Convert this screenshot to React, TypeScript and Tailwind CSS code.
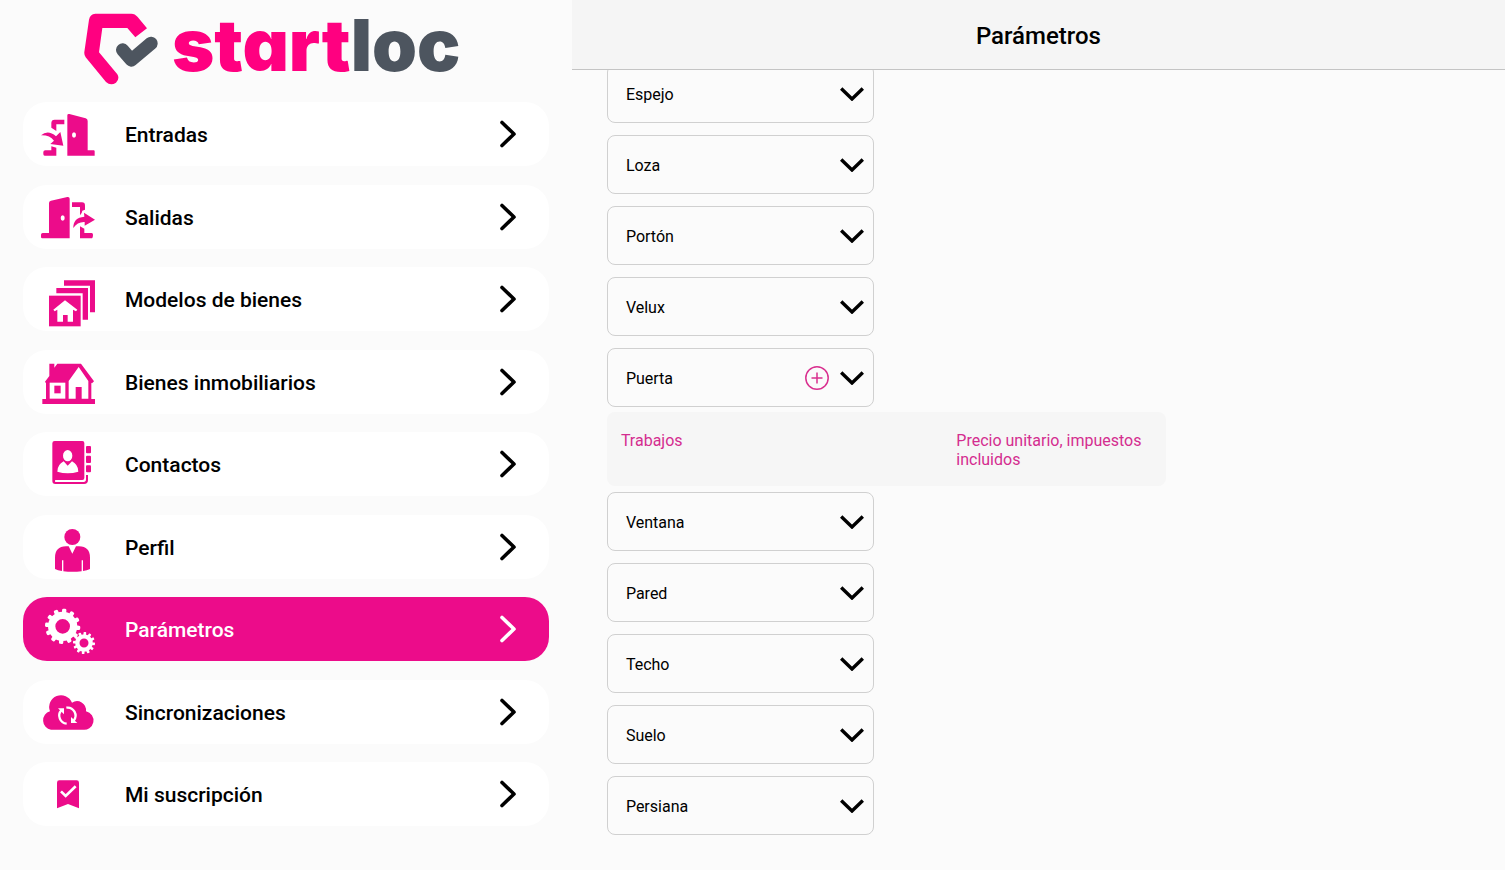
import React, { useState } from 'react';

interface NavItem {
  id: string;
  label: string;
  icon: React.ReactNode;
}

const GEAR_ANGLES = [0, 30, 60, 90, 120, 150, 180, 210, 240, 270, 300, 330];

const IconFrame = ({ viewBox, children }: { viewBox: string; children: React.ReactNode }) => (
  <svg viewBox={viewBox} className="h-16 w-[60px] shrink-0" fill="currentColor" aria-hidden="true">
    {children}
  </svg>
);

const NAV_ITEMS: NavItem[] = [
  {
    id: 'entradas',
    label: 'Entradas',
    icon: (
      <IconFrame viewBox="69 22 180 192">
        <path d="M157 62Q157 57 163 58L212 71Q218 73 218 79V167H236Q239 167 239 170V183H157Z" />
        <path d="M109 99V85Q109 75 119 75H148V89H124V109Z" />
        <path d="M89 183Q85 183 85 178V172Q85 167 91 167H109V155L124 159V183Z" />
        <path d="M78 122Q99 104 123 125L136 112L145 153L106 148L117 138Q104 121 78 122Z" />
        <ellipse cx="177" cy="121" rx="6" ry="8" fill="#fff" />
      </IconFrame>
    ),
  },
  {
    id: 'salidas',
    label: 'Salidas',
    icon: (
      <IconFrame viewBox="69 269 180 192">
        <path d="M102 323Q102 317 108 316L157 305Q164 304 164 310V429H82Q78 429 78 425V418Q78 413 83 413H102Z" />
        <path d="M171 321H201Q210 321 210 331V343L202 346Q201 354 195 360V335H171Z" />
        <path d="M195 393L208 400V413H230Q234 413 234 418Q234 429 229 429H195Z" />
        <path d="M175 398Q174 367 208 364L207 352L240 373L209 391V380Q187 379 175 398Z" />
        <ellipse cx="143" cy="368" rx="6" ry="8" fill="#fff" />
      </IconFrame>
    ),
  },
  {
    id: 'modelos',
    label: 'Modelos de bienes',
    icon: (
      <IconFrame viewBox="69 21 180 192">
        <path d="M102 107H197V199H102Z" />
        <path d="M124 84H219V179H203V100H124Z" />
        <path d="M147 61H240V157H225V77H147Z" />
        <path
          d="M150 121L187 149L183 154L174 149V185H158V165H144V185H127V149L119 154L115 149Z"
          fill="#fff"
        />
      </IconFrame>
    ),
  },
  {
    id: 'bienes',
    label: 'Bienes inmobiliarios',
    icon: (
      <IconFrame viewBox="69 269 180 192">
        <path d="M103 310H118V322L127 310H198L237 363L231 369L229 367V416H240V431H82V416H93V369L90 364L103 347Z" />
        <path d="M104 367H151V415H104Z" fill="#fff" />
        <path d="M191 320L220 362V415H200V380H182V415H161V362Z" fill="#fff" />
        <path d="M118 376H137V399H118Z" />
      </IconFrame>
    ),
  },
  {
    id: 'contactos',
    label: 'Contactos',
    icon: (
      <IconFrame viewBox="69 21 180 192">
        <path d="M119 48H202Q208 48 208 54V159Q208 165 202 165H121Q118 168 121 171H206Q213 171 213 163V150H219V165Q219 177 207 177H121Q112 177 112 168V55Q112 48 119 48Z" />
        <rect x="213" y="63" width="15" height="22" rx="3" />
        <rect x="213" y="92" width="15" height="22" rx="3" />
        <rect x="213" y="121" width="15" height="21" rx="3" />
        <ellipse cx="158" cy="92" rx="14" ry="17" fill="#fff" />
        <path d="M127 140Q127 119 146 109L158 122L171 109Q190 119 190 140Q158 149 127 140Z" fill="#fff" />
      </IconFrame>
    ),
  },
  {
    id: 'perfil',
    label: 'Perfil',
    icon: (
      <IconFrame viewBox="69 269 180 192">
        <circle cx="172" cy="335" r="24" />
        <path d="M120 431V397Q120 364 153 363H161L172 385L183 363H192Q225 364 225 397V431Q216 435 204 437V405H200V438Q172 441 145 438V405H141V437Q128 435 120 431Z" />
      </IconFrame>
    ),
  },
  {
    id: 'parametros',
    label: 'Parámetros',
    icon: (
      <IconFrame viewBox="69 21 180 192">
        <circle cx="143" cy="109" r="33" fill="none" stroke="currentColor" strokeWidth="22" />
        <circle cx="207" cy="159" r="20" fill="none" stroke="currentColor" strokeWidth="13" />
        {GEAR_ANGLES.map((angle) => (
          <g key={angle}>
            <rect x="137" y="56" width="13" height="14" rx="4" transform={`rotate(${angle + 5} 143 109)`} />
            <rect x="203" y="126" width="8" height="9" rx="2" transform={`rotate(${angle + 5} 207 159)`} />
          </g>
        ))}
      </IconFrame>
    ),
  },
  {
    id: 'sincronizaciones',
    label: 'Sincronizaciones',
    icon: (
      <IconFrame viewBox="72 31 180 192">
        <path d="M111 180A27 28 0 0 1 108 125A34 34 0 0 1 174 99A27 28 0 0 1 216 125A28 28 0 0 1 205 180Z" />
        <g fill="none" stroke="#fff" strokeWidth="7">
          <path d="M158 162A24 24 0 0 1 142 122" />
          <path d="M157 114A24 24 0 0 1 179 153" />
        </g>
        <path d="M132 116H150V134Z" fill="#fff" />
        <path d="M171 142V160H190Z" fill="#fff" />
      </IconFrame>
    ),
  },
  {
    id: 'suscripcion',
    label: 'Mi suscripción',
    icon: (
      <IconFrame viewBox="69 275 180 192">
        <path d="M126 337Q126 330 133 330H185Q192 330 192 337V414L159 401L126 414Z" />
        <path d="M138 363L152 377L182 348" fill="none" stroke="#fff" strokeWidth="8" />
      </IconFrame>
    ),
  },
];

const ELEMENTS = ['Espejo', 'Loza', 'Portón', 'Velux', 'Puerta', 'Ventana', 'Pared', 'Techo', 'Suelo', 'Persiana'];

const Logo = () => (
  <a href="#inicio" className="flex h-[102px] shrink-0 items-center gap-3.5 pb-1 pl-[61px]">
    <svg viewBox="42 38 222 216" className="h-[72px] w-[74px] shrink-0" aria-hidden="true">
      <path
        d="M76 40H184Q195 40 203 50L231 84L196 111L172 83H97L87 156L142 222Q150 235 138 247Q122 258 108 245L47 171Q42 164 43 155L57 58Q60 41 76 40Z"
        fill="#ff0080"
      />
      <path
        d="M158 149L184 179L243 129"
        fill="none"
        stroke="#4d555f"
        strokeWidth="40"
        strokeLinecap="round"
        strokeLinejoin="round"
      />
    </svg>
    <span className="pb-2 font-['Inter',sans-serif] text-[72px] leading-[88px] font-black text-[#ff0080] [font-feature-settings:'cv11']">
      start<span className="text-[#4d555f]">loc</span>
    </span>
  </a>
);

export default function App() {
  const [activeNav, setActiveNav] = useState('parametros');
  const [openElement, setOpenElement] = useState<string | null>('Puerta');

  const toggleElement = (name: string) => {
    setOpenElement((prev) => (prev === name ? null : name));
  };

  return (
    <div className="flex h-screen overflow-hidden bg-[#fbfbfb] font-['Roboto',sans-serif] text-black">

      {/* Sidebar */}
      <aside className="flex w-[38%] flex-col px-[23px] pb-11">
        <Logo />
        <nav className="flex flex-1 flex-col justify-between">
          {NAV_ITEMS.map((item) => (
            <a
              key={item.id}
              href={`#${item.id}`}
              onClick={() => setActiveNav(item.id)}
              className={`flex h-16 items-center rounded-3xl pr-[33px] pl-[15px] ${
                activeNav === item.id ? 'bg-[#ec0c8a] text-white' : 'bg-white text-[#ec0c8a]'
              }`}
            >
              {item.icon}
              <span
                className={`ml-[27px] flex-1 pt-0.5 text-[21px] leading-8 font-medium ${
                  activeNav === item.id ? 'text-white' : 'text-black'
                }`}
              >
                {item.label}
              </span>
              <svg
                viewBox="0 0 16 28"
                className={`h-7 w-4 ${activeNav === item.id ? 'text-white' : 'text-black'}`}
                fill="none"
                stroke="currentColor"
                strokeWidth="3.6"
                strokeLinecap="round"
                strokeLinejoin="round"
                aria-hidden="true"
              >
                <path d="M2 2.5L14 14L2 25.5" />
              </svg>
            </a>
          ))}
        </nav>
      </aside>

      {/* Content */}
      <main className="flex flex-1 flex-col">
        <header className="flex h-[70px] shrink-0 items-center justify-center border-b border-[#c4c4c4] bg-[#f5f5f5] pt-0.5">
          <h1 className="text-2xl font-medium">Parámetros</h1>
        </header>

        <div className="flex-1 overflow-hidden px-[35px]">
          <ul className="-mt-1.5 flex flex-col gap-3">
            {ELEMENTS.map((name) => {
              const isOpen = openElement === name;
              return (
                <li key={name} className={isOpen ? '-mb-1.5' : ''}>
                  <div className="flex h-[59px] w-[267px] items-center gap-[11px] rounded-lg border border-[#d0d0d0] pr-[9px]">
                    <button
                      type="button"
                      onClick={() => toggleElement(name)}
                      className="h-full flex-1 pt-0.5 pl-[18px] text-left text-base"
                    >
                      {name}
                    </button>
                    {isOpen && (
                      <button type="button" aria-label="Añadir" className="text-[#d9308f]">
                        <svg viewBox="0 0 24 24" className="size-6" fill="none" stroke="currentColor" strokeWidth="1.5">
                          <circle cx="12" cy="12" r="11.2" />
                          <path d="M12 6.5V17.5M6.5 12H17.5" />
                        </svg>
                      </button>
                    )}
                    <button type="button" aria-label={`Desplegar ${name}`} onClick={() => toggleElement(name)}>
                      <svg viewBox="0 0 24 14" className="h-3.5 w-6" fill="none" stroke="currentColor" strokeWidth="3.4">
                        <path d="M1.2 1.5L12 12L22.8 1.5" />
                      </svg>
                    </button>
                  </div>

                  {isOpen && (
                    <div className="mt-[5px] h-[74px] w-3/5 min-w-[559px] rounded-lg bg-[#f6f6f6] pt-[19px]">
                      <table className="w-full table-fixed text-left text-base leading-[19px] text-[#d42d8f]">
                        <thead>
                          <tr className="align-top">
                            <th className="w-3/5 pl-3.5 font-normal">Trabajos</th>
                            <th className="w-2/5 pl-3.5 font-normal">Precio unitario, impuestos incluidos</th>
                          </tr>
                        </thead>
                      </table>
                    </div>
                  )}
                </li>
              );
            })}
          </ul>
        </div>
      </main>

    </div>
  );
}
